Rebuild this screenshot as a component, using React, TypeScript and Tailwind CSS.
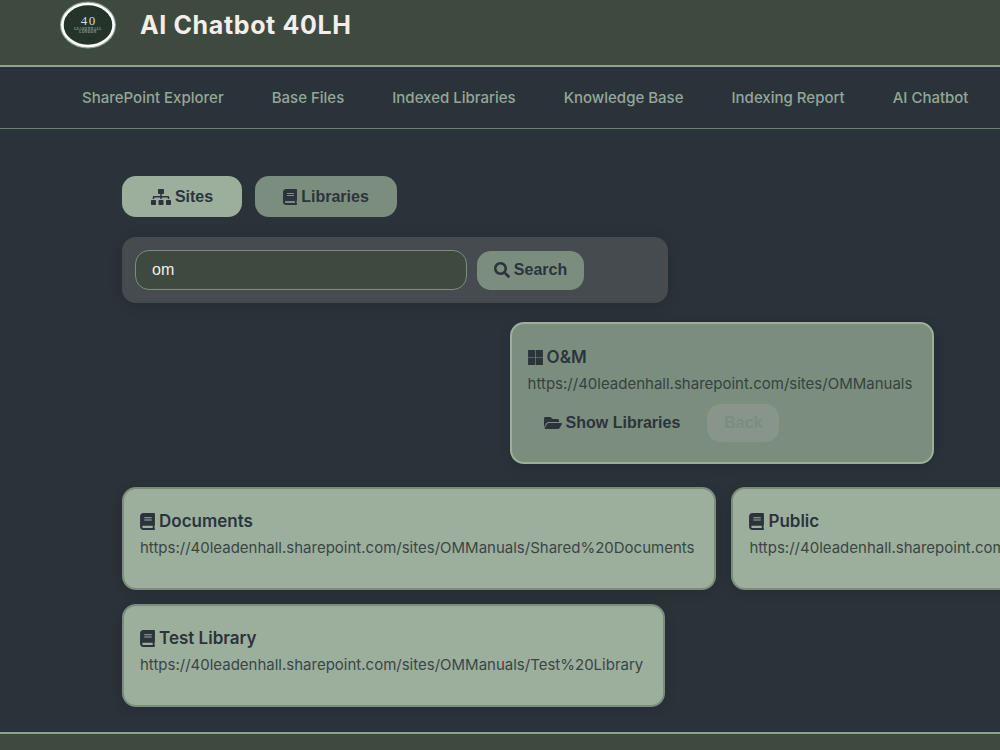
import { useState } from 'react';
import { FaBook, FaFolderOpen, FaMicrosoft, FaSearch, FaSitemap } from 'react-icons/fa';

const navLinks = [
  'SharePoint Explorer',
  'Base Files',
  'Indexed Libraries',
  'Knowledge Base',
  'Indexing Report',
  'AI Chatbot',
];

const SITE_URL = 'https://40leadenhall.sharepoint.com/sites/OMManuals';

const libraries = [
  { name: 'Documents', url: `${SITE_URL}/Shared%20Documents` },
  { name: 'Public', url: `${SITE_URL}/Public` },
  { name: 'Test Library', url: `${SITE_URL}/Test%20Library` },
];

function Logo() {
  return (
    <svg className="w-14 h-12" viewBox="0 0 56 48" role="img" aria-label="40 Leadenhall London">
      <ellipse cx="28" cy="24" rx="28" ry="23.5" fill="#8fa691" />
      <ellipse cx="28" cy="24" rx="25.6" ry="21" fill="#24342b" stroke="#ffffff" strokeWidth="2.6" />
      <text x="28.7" y="23.5" textAnchor="middle" fontFamily="Liberation Serif, serif" fontSize="13" letterSpacing="1.5" fill="#d5dbd5">
        40
      </text>
      <text x="28" y="28.5" textAnchor="middle" fontFamily="Liberation Serif, serif" fontSize="3.4" letterSpacing="0.5" fill="#c3ccc4">
        LEADENHALL
      </text>
      <text x="28" y="32" textAnchor="middle" fontFamily="Liberation Serif, serif" fontSize="3.4" letterSpacing="0.5" fill="#c3ccc4">
        LONDON
      </text>
    </svg>
  );
}

function LibraryCard({ name, url }: { name: string; url: string }) {
  return (
    <article className="h-[103px] pl-4 pr-5 pt-5 rounded-[14px] border-2 border-[#7b8e7e] bg-[#9caf9d] shadow-[0_2px_12px_rgba(0,0,0,0.15)]">
      <h3 className="flex items-center gap-1 text-[17px] leading-6 font-semibold">
        <FaBook className="w-[15px] h-[17px]" /> {name}
      </h3>
      <p className="pt-[3px] text-[15px] leading-6 text-[#3a4644] whitespace-nowrap">{url}</p>
    </article>
  );
}

function App() {
  const [tab, setTab] = useState<'sites' | 'libraries'>('sites');
  const [query, setQuery] = useState('om');

  const tabClass = (active: boolean) =>
    active ? 'bg-[#9caf9d]' : 'bg-[#7b8e7e]';

  return (
    <div className="w-full min-h-screen overflow-hidden flex flex-col bg-[#2b333a] text-[#2b343b] font-['Inter',sans-serif]">
      <header className="h-[67px] pl-[60px] pb-4 flex items-center gap-6 bg-[#3e4a40] border-b-2 border-[#8fa28f]">
        <Logo />
        <h1 className="text-[25px] leading-8 font-bold tracking-wide text-[#f3eeea]">AI Chatbot 40LH</h1>
      </header>

      <nav className="h-[62px] pl-[82px] flex items-center gap-12 border-b border-[#6f8073]">
        {navLinks.map((label) => (
          <a key={label} href="#" className="text-[15px] leading-6 font-medium text-[#94a796] whitespace-nowrap">
            {label}
          </a>
        ))}
      </nav>

      <main className="grow pl-[122px] pt-[47px] pb-[25px]">
        {/* Fixed-measure column, wider than small windows */}
        <div className="w-[1200px]">
          <div className="flex gap-[13px] font-['Liberation_Sans',sans-serif]">
            <button
              type="button"
              onClick={() => setTab('sites')}
              className={`h-[41px] w-[120px] flex items-center justify-center gap-1 rounded-[14px] text-base font-bold ${tabClass(tab === 'sites')}`}
            >
              <FaSitemap className="w-5 h-4" /> Sites
            </button>
            <button
              type="button"
              onClick={() => setTab('libraries')}
              className={`h-[41px] w-[142px] flex items-center justify-center gap-1 rounded-[14px] text-base font-bold ${tabClass(tab === 'libraries')}`}
            >
              <FaBook className="w-[14px] h-4" /> Libraries
            </button>
          </div>

          <form
            onSubmit={(e) => e.preventDefault()}
            className="mt-5 w-[546px] h-[66px] px-[13px] flex items-center gap-2.5 rounded-[14px] bg-[#454b4e] shadow-[0_2px_14px_rgba(0,0,0,0.15)] font-['Liberation_Sans',sans-serif]"
          >
            <input
              type="text"
              aria-label="Search sites"
              value={query}
              onChange={(e) => setQuery(e.target.value)}
              className="w-[332px] h-10 px-4 rounded-[14px] border border-[#7b8e7e] bg-[#3e4a40] text-base text-[#f3eeea] outline-none"
            />
            <button type="submit" className="h-[39px] w-[107px] flex items-center justify-center gap-1 rounded-[14px] bg-[#7b8e7e] text-base font-bold">
              <FaSearch className="w-4 h-4" /> Search
            </button>
          </form>

          <section className="mt-[19px] flex justify-center">
            <article className="h-[142px] pl-4 pr-5 pt-[21px] rounded-[14px] border-2 border-[#9caf9d] bg-[#7b8e7e] shadow-[0_2px_12px_rgba(0,0,0,0.15)]">
              <h3 className="flex items-center gap-1 text-[17px] leading-6 font-semibold">
                <FaMicrosoft className="w-[15px] h-[17px]" /> O&amp;M
              </h3>
              <p className="pt-[3px] text-[15px] leading-6 text-[#364240] whitespace-nowrap">{SITE_URL}</p>
              <div className="mt-2 flex gap-[11px] font-['Liberation_Sans',sans-serif]">
                <button type="button" className="h-[38px] px-4 flex items-center gap-1 text-base font-bold">
                  <FaFolderOpen className="w-[18px] h-4" /> Show Libraries
                </button>
                <button type="button" disabled className="h-[38px] w-[72px] rounded-[14px] bg-[#87958a] text-base font-bold text-[#7b8e7e]">
                  Back
                </button>
              </div>
            </article>
          </section>

          <section className="mt-[23px] flex flex-wrap gap-x-[15px] gap-y-[14px]">
            {libraries.map((lib) => (
              <LibraryCard key={lib.name} {...lib} />
            ))}
          </section>
        </div>
      </main>

      <footer className="h-[18px] bg-[#3e4a40] border-t-2 border-[#8fa28f]" />
    </div>
  );
}

export default App;
